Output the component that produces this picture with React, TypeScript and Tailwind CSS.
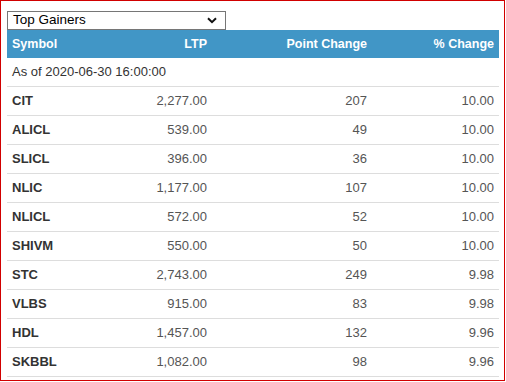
import React from 'react';

const rows = [
  { symbol: 'CIT', ltp: '2,277.00', point: '207', pct: '10.00' },
  { symbol: 'ALICL', ltp: '539.00', point: '49', pct: '10.00' },
  { symbol: 'SLICL', ltp: '396.00', point: '36', pct: '10.00' },
  { symbol: 'NLIC', ltp: '1,177.00', point: '107', pct: '10.00' },
  { symbol: 'NLICL', ltp: '572.00', point: '52', pct: '10.00' },
  { symbol: 'SHIVM', ltp: '550.00', point: '50', pct: '10.00' },
  { symbol: 'STC', ltp: '2,743.00', point: '249', pct: '9.98' },
  { symbol: 'VLBS', ltp: '915.00', point: '83', pct: '9.98' },
  { symbol: 'HDL', ltp: '1,457.00', point: '132', pct: '9.96' },
  { symbol: 'SKBBL', ltp: '1,082.00', point: '98', pct: '9.96' },
];

const cols = 'grid grid-cols-[130px_75px_160px_127px]';

const App = () => {
  return (
    <div
      className="w-[505px] h-[381px] border border-[#d10000] bg-white pl-[6px] pt-[10px]"
      style={{ fontFamily: '"Liberation Sans", Arial, sans-serif' }}
    >
      {/* dropdown */}
      <div className="flex h-[19px] w-[219px] items-center justify-between border border-[#767676] bg-white pl-[5px] pr-[8px] text-[13.5px] text-black">
        <span>Top Gainers</span>
        <svg width="10" height="7" viewBox="0 0 10 7">
          <path d="M1 1.2 L5 5.2 L9 1.2" fill="none" stroke="#111" strokeWidth="2" />
        </svg>
      </div>

      {/* table */}
      <div className="w-[492px]">
        <div className={`${cols} h-[28px] items-center bg-[#4196c6] text-[12.5px] font-bold text-white`}>
          <div className="pl-[5px]">Symbol</div>
          <div className="pr-[5px] text-right">LTP</div>
          <div className="pr-[5px] text-right">Point Change</div>
          <div className="pr-[5px] text-right">% Change</div>
        </div>
        <div className="flex h-[29px] items-center border-b border-[#dddddd] pl-[5px] text-[13px] text-[#333]">
          As of 2020-06-30 16:00:00
        </div>
        {rows.map((r) => (
          <div
            key={r.symbol}
            className={`${cols} h-[29px] items-center border-b border-[#dddddd] text-[13px] text-[#555]`}
          >
            <div className="pl-[5px] font-bold text-[#333]">{r.symbol}</div>
            <div className="pr-[5px] text-right">{r.ltp}</div>
            <div className="pr-[5px] text-right">{r.point}</div>
            <div className="pr-[5px] text-right">{r.pct}</div>
          </div>
        ))}
      </div>
    </div>
  );
};

export default App;
